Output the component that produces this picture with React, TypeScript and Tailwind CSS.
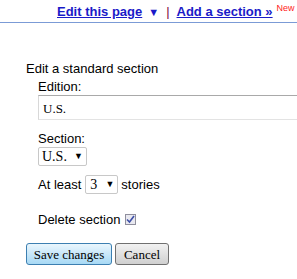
import React from "react";

export default function App() {
  return (
    <div className="w-[297px] h-[279px] bg-white overflow-hidden font-['Liberation_Sans',Arial,sans-serif] text-[13px] text-black">
      {/* Top nav */}
      <div className="h-[23px] border-b border-[#7b9bd6] flex items-end pl-[57px] whitespace-nowrap">
        <a className="font-bold text-[13px] text-[#1a1ac8] underline leading-[20px]">Edit this page</a>
        <span className="text-[#1a1ac8] text-[11px] ml-[6px] leading-[20px]">▼</span>
        <span className="text-[#800040] ml-[7px] leading-[20px]">|</span>
        <a className="font-bold text-[13px] text-[#1a1ac8] underline ml-[7px] leading-[20px]">Add a section »</a>
        <span className="text-[#ff2020] text-[9px] self-start ml-[4px] mt-[2px]">New</span>
      </div>

      <div className="pl-[26px] pt-[38px]">
        <div className="leading-[15px]">Edit a standard section</div>
        <div className="pl-[12px]">
          <div className="mt-[3px] leading-[15px]">Edition:</div>
          <div className="mt-[1px] h-[25px] w-[300px] border border-[#a9a9a9] border-r-0 border-b-[#e3e3e3] border-l-[#d8d8d8] font-['Liberation_Serif',serif] text-[13px] pl-[4px] pt-[3px]">
            U.S.
          </div>

          <div className="mt-[11px] leading-[15px]">Section:</div>
          <div className="mt-[1px] flex">
            <div className="h-[19px] w-[49px] border border-[#c8c8c8] rounded-[2px] flex items-center pl-[3px] font-['Liberation_Serif',serif] text-[14px]">
              <span>U.S.</span>
              <span className="ml-auto mr-[3px] text-[9px]">▼</span>
            </div>
          </div>

          <div className="mt-[9px] flex items-center">
            <span>At least</span>
            <div className="ml-[4px] h-[19px] w-[33px] border border-[#c8c8c8] rounded-[2px] flex items-center pl-[4px] font-['Liberation_Serif',serif] text-[14px]">
              <span>3</span>
              <span className="ml-auto mr-[3px] text-[9px]">▼</span>
            </div>
            <span className="ml-[3px]">stories</span>
          </div>

          <div className="mt-[15px] flex items-center">
            <span>Delete section</span>
            <div className="ml-[5px] w-[11px] h-[11px] border border-[#8f8f9d] bg-[#e9e9f0] flex items-center justify-center">
              <svg width="9" height="9" viewBox="0 0 9 9">
                <path d="M1 4.5 L3.5 7 L8 1" stroke="#3d4fa8" strokeWidth="1.6" fill="none" />
              </svg>
            </div>
          </div>
        </div>

        <div className="mt-[14px] flex gap-[3px]">
          <button className="h-[22px] w-[86px] rounded-[3px] border border-[#3c7fb1] bg-gradient-to-b from-[#eaf6fd] to-[#a7d9f5] font-['Liberation_Serif',serif] text-[13px] leading-none">
            Save changes
          </button>
          <button className="h-[22px] w-[54px] rounded-[3px] border border-[#707070] bg-gradient-to-b from-[#f2f2f2] to-[#d0d0d0] font-['Liberation_Serif',serif] text-[13px] leading-none">
            Cancel
          </button>
        </div>
      </div>
    </div>
  );
}
